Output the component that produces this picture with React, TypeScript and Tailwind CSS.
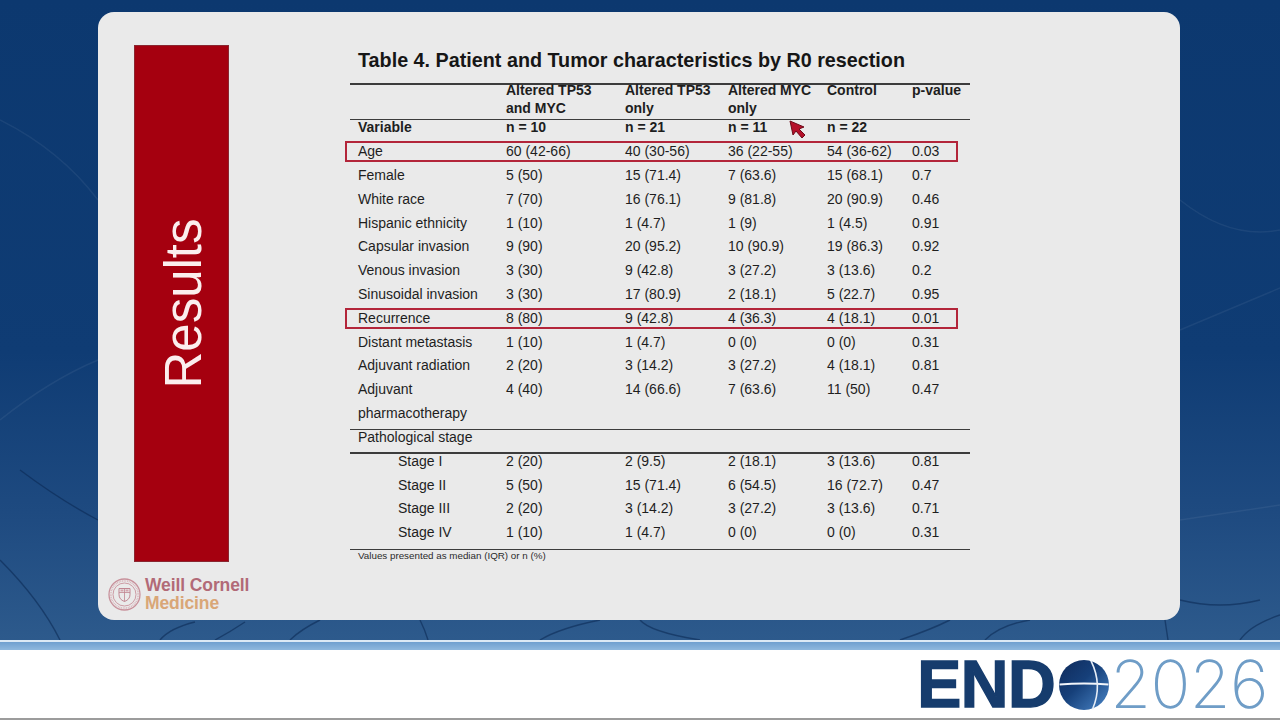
import React from "react";

type Row = { label: string[]; vals: string[]; box?: boolean };

const rows: Row[] = [
  { label: ["Age"], vals: ["60 (42-66)", "40 (30-56)", "36 (22-55)", "54 (36-62)", "0.03"], box: true },
  { label: ["Female"], vals: ["5 (50)", "15 (71.4)", "7 (63.6)", "15 (68.1)", "0.7"] },
  { label: ["White race"], vals: ["7 (70)", "16 (76.1)", "9 (81.8)", "20 (90.9)", "0.46"] },
  { label: ["Hispanic ethnicity"], vals: ["1 (10)", "1 (4.7)", "1 (9)", "1 (4.5)", "0.91"] },
  { label: ["Capsular invasion"], vals: ["9 (90)", "20 (95.2)", "10 (90.9)", "19 (86.3)", "0.92"] },
  { label: ["Venous invasion"], vals: ["3 (30)", "9 (42.8)", "3 (27.2)", "3 (13.6)", "0.2"] },
  { label: ["Sinusoidal invasion"], vals: ["3 (30)", "17 (80.9)", "2 (18.1)", "5 (22.7)", "0.95"] },
  { label: ["Recurrence"], vals: ["8 (80)", "9 (42.8)", "4 (36.3)", "4 (18.1)", "0.01"], box: true },
  { label: ["Distant metastasis"], vals: ["1 (10)", "1 (4.7)", "0 (0)", "0 (0)", "0.31"] },
  { label: ["Adjuvant radiation"], vals: ["2 (20)", "3 (14.2)", "3 (27.2)", "4 (18.1)", "0.81"] },
  { label: ["Adjuvant", "pharmacotherapy"], vals: ["4 (40)", "14 (66.6)", "7 (63.6)", "11 (50)", "0.47"] },
];

const stages: Row[] = [
  { label: ["Stage I"], vals: ["2 (20)", "2 (9.5)", "2 (18.1)", "3 (13.6)", "0.81"] },
  { label: ["Stage II"], vals: ["5 (50)", "15 (71.4)", "6 (54.5)", "16 (72.7)", "0.47"] },
  { label: ["Stage III"], vals: ["2 (20)", "3 (14.2)", "3 (27.2)", "3 (13.6)", "0.71"] },
  { label: ["Stage IV"], vals: ["1 (10)", "1 (4.7)", "0 (0)", "0 (0)", "0.31"] },
];

const grid = "grid grid-cols-[156px_119px_103px_99px_85px_58px]";

function Line() {
  return <div className="h-[1.5px] w-full bg-[#3c3c3c]" />;
}

function BodyRow({ r }: { r: Row }) {
  return (
    <div className={`${grid} relative leading-[16px]`}>
      {r.box && (
        <div className="absolute left-[-5px] top-[-2px] h-[21px] w-[613px] border-[2.5px] border-[#b3253a]" />
      )}
      <div className="pl-[8px]">
        {r.label.map((l) => (
          <div key={l} className="h-[23.8px] whitespace-nowrap">
            {l}
          </div>
        ))}
      </div>
      {r.vals.map((v, i) => (
        <div key={i} className="h-[23.8px] whitespace-nowrap">
          {v}
        </div>
      ))}
    </div>
  );
}

function StageRow({ r }: { r: Row }) {
  return (
    <div className={`${grid} h-[23.8px] leading-[14px]`}>
      <div className="pl-[48px] whitespace-nowrap">{r.label[0]}</div>
      {r.vals.map((v, i) => (
        <div key={i} className="whitespace-nowrap">
          {v}
        </div>
      ))}
    </div>
  );
}

function Seal() {
  return (
    <svg width="33" height="33" viewBox="0 0 33 33">
      <circle cx="16.5" cy="16.5" r="15.5" fill="none" stroke="#c8919b" strokeWidth="1.3" />
      <circle cx="16.5" cy="16.5" r="11.5" fill="none" stroke="#c8919b" strokeWidth="0.9" />
      <circle cx="16.5" cy="16.5" r="13.6" fill="none" stroke="#d8b0b7" strokeWidth="1.6" strokeDasharray="0.8 0.9" />
      <path d="M11 10.5 h11 v6 q0 5 -5.5 7 q-5.5 -2 -5.5 -7 z" fill="none" stroke="#c08591" strokeWidth="1" />
      <path d="M11 14.5 h11 M16.5 10.5 v13" stroke="#c08591" strokeWidth="0.8" />
      <rect x="12.5" y="11.5" width="3" height="2" fill="#d3a2ab" />
      <rect x="17.5" y="11.5" width="3" height="2" fill="#d3a2ab" />
    </svg>
  );
}

function Globe() {
  return (
    <svg width="52" height="52" viewBox="0 0 52 52">
      <defs>
        <linearGradient id="g1" x1="0" y1="0" x2="1" y2="1">
          <stop offset="0" stopColor="#0f2a5a" />
          <stop offset="0.45" stopColor="#16407a" />
          <stop offset="1" stopColor="#4a86c8" />
        </linearGradient>
      </defs>
      <circle cx="26" cy="26" r="25" fill="url(#g1)" />
      <path d="M1.5 25.5 Q26 23.5 50.5 25.5" fill="none" stroke="#f2f5fa" strokeWidth="1.8" />
      <path d="M33 1.8 Q45 26 34.5 50.2" fill="none" stroke="#e6edf6" strokeWidth="1.6" />
    </svg>
  );
}

function Cursor() {
  return (
    <svg width="18" height="20" viewBox="0 0 18 20">
      <path d="M1 1 L4 15 L7 11 L13 18 L16 15 L10 9 L15 7 Z" fill="#b5102a" stroke="#6e0a18" strokeWidth="1" strokeLinejoin="round" />
    </svg>
  );
}

export default function App() {
  return (
    <div className="w-[1280px] h-[720px] overflow-hidden flex flex-col bg-white font-['Liberation_Sans',Arial,sans-serif]">
      {/* Blue background area */}
      <div className="relative h-[640px] bg-[linear-gradient(180deg,#0c386f_0%,#0f3c74_55%,#1e4a80_80%,#2d5a8c_100%)] pt-[12px] pl-[98px]">
        <svg className="absolute inset-0" width="1280" height="640" viewBox="0 0 1280 640">
          <g fill="none" stroke="#ffffff" strokeOpacity="0.06" strokeWidth="1.5">
            <path d="M1180 330 L1280 288" />
            <path d="M1180 520 L1280 505" />
            <path d="M0 120 Q60 150 98 200" />
            <path d="M0 420 Q50 380 98 360" />
            <path d="M1180 200 Q1230 240 1280 230" />
          </g>
          <g fill="none" stroke="#0a2650" strokeOpacity="0.55" strokeWidth="1.4">
            <path d="M160 640 Q170 628 195 622" />
            <path d="M245 622 Q230 632 215 640" />
            <path d="M290 640 Q300 630 320 620" />
            <path d="M420 620 Q425 630 428 640" />
            <path d="M540 640 Q560 628 600 620" />
            <path d="M640 620 Q650 632 700 640" />
            <path d="M900 640 Q930 630 950 620" />
            <path d="M985 640 Q1000 625 1030 620" />
            <path d="M1165 620 L1168 640" />
            <path d="M1240 640 Q1250 625 1280 615" />
            <path d="M0 560 Q40 600 60 640" />
            <path d="M20 470 Q60 500 98 520" />
            <path d="M1180 600 Q1220 610 1260 600" />
          </g>
        </svg>

        {/* Card */}
        <div className="relative flex w-[1082px] h-[608px] rounded-[16px] bg-[#eaeaea]">
          {/* Left column */}
          <div className="flex w-[252px] flex-col">
            <div className="ml-[36px] mt-[33px] flex h-[517px] w-[95px] items-center justify-center border border-[#8a2630] bg-[#a5000f]">
              <span className="ml-[3px] inline-block -rotate-90 whitespace-nowrap text-[51px] leading-none text-[#fbeeee]">
                Results
              </span>
            </div>
            <div className="ml-[10px] mt-[15px] flex items-center gap-[4px]">
              <Seal />
              <div className="flex flex-col text-[17.5px] font-bold leading-[17.5px] tracking-[-0.1px]">
                <span className="text-[#b26a77]">Weill Cornell</span>
                <span className="text-[#d9a677]">Medicine</span>
              </div>
            </div>
          </div>

          {/* Table column */}
          <div className="relative flex w-[620px] flex-col pt-[36px] text-[14px] text-[#1e1e1e]">
            <div className="h-[24px] whitespace-nowrap pl-[8px] text-[19.75px] font-bold leading-[24px] text-[#161616]">
              Table 4. Patient and Tumor characteristics by R0 resection
            </div>
            <div className="mt-[11px]">
              <Line />
            </div>
            <div className={`${grid} h-[34px] font-bold leading-[18px]`}>
              <div className="-mt-[3.5px]" />
              <div className="-mt-[3.5px]">
                Altered TP53
                <br />
                and MYC
              </div>
              <div className="-mt-[3.5px]">
                Altered TP53
                <br />
                only
              </div>
              <div className="-mt-[3.5px]">
                Altered MYC
                <br />
                only
              </div>
              <div className="-mt-[3.5px]">Control</div>
              <div className="-mt-[3.5px]">p-value</div>
            </div>
            <Line />
            <div className={`${grid} h-[23.2px] font-bold leading-[14px]`}>
              <div className="pl-[8px]">Variable</div>
              <div>n = 10</div>
              <div>n = 21</div>
              <div>n = 11</div>
              <div>n = 22</div>
              <div />
            </div>
            {rows.map((r) => (
              <BodyRow key={r.label.join()} r={r} />
            ))}
            <Line />
            <div className="h-[22px] pl-[8px] leading-[14px]">Pathological stage</div>
            <Line />
            {stages.map((r) => (
              <StageRow key={r.label[0]} r={r} />
            ))}
            <Line />
            <div className="pl-[8px] text-[9.8px] leading-[12px] text-[#2a2a2a]">
              Values presented as median (IQR) or n (%)
            </div>

            <div className="absolute left-[439px] top-[108px]">
              <Cursor />
            </div>
          </div>
        </div>
      </div>

      {/* Stripe */}
      <div className="h-[1.5px] bg-[#dce9f5]" />
      <div className="h-[8.5px] bg-[linear-gradient(180deg,#6f9fcf_0%,#8fb8de_100%)]" />

      {/* Footer */}
      <div className="flex h-[68px] items-center justify-end pr-[12px]">
        <div className="flex items-center">
          <span className="text-[66px] font-bold leading-[68px] tracking-[-0.5px] text-[#163c6d] [-webkit-text-stroke:1.5px_#163c6d]">
            END
          </span>
          <div className="ml-[3px] mt-[2px]">
            <Globe />
          </div>
          <span className="font-['Inter',sans-serif] text-[66px] font-extralight leading-[68px] tracking-[-0.5px] text-[#6f9dc7]">
            2026
          </span>
        </div>
      </div>
      <div className="h-[2px] bg-[#9c9c9c]" />
    </div>
  );
}
